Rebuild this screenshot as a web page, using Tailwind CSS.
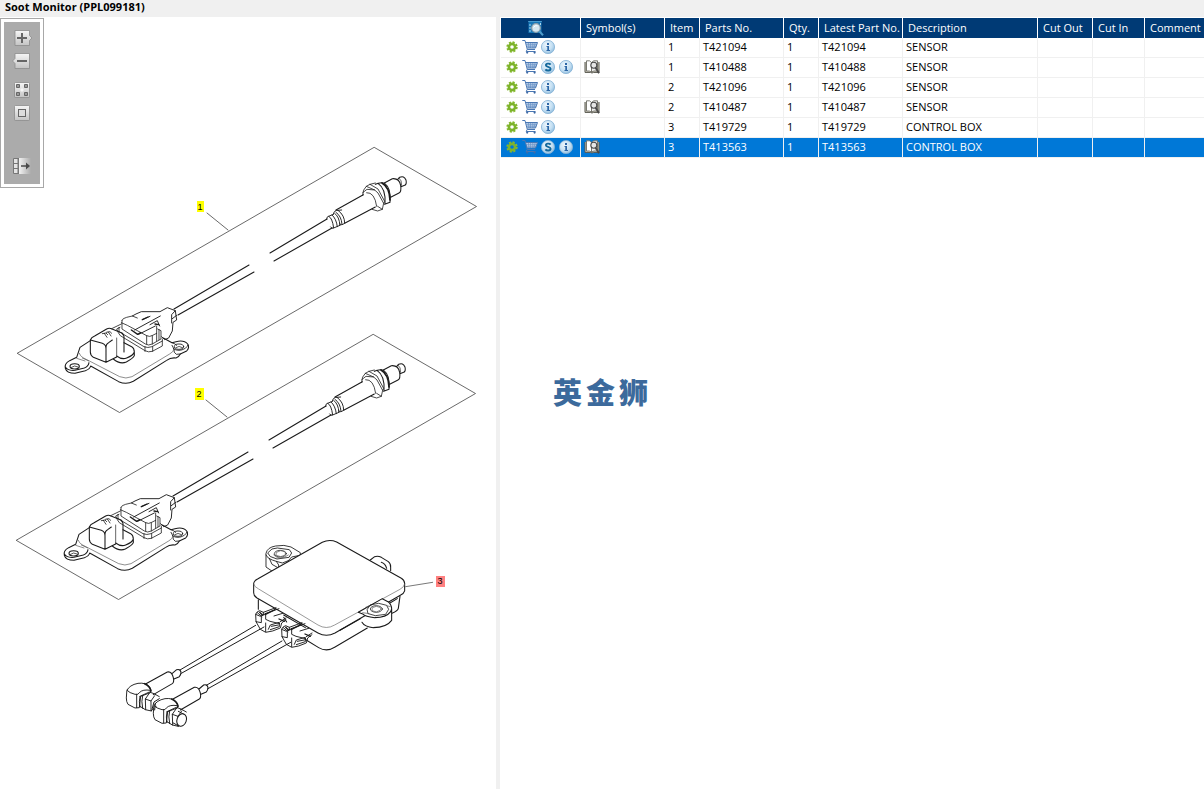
<!DOCTYPE html>
<html lang="en">
<head>
    <meta charset="UTF-8">
    <meta name="viewport" content="width=device-width, initial-scale=1.0">
    <title>Soot Monitor (PPL099181)</title>
    <script src="https://cdn.jsdelivr.net/npm/@tailwindcss/browser@4"></script>
</head>
<body class="bg-white text-black text-[11px] leading-4 font-['Open_Sans','Noto_Sans',sans-serif] min-h-screen flex flex-col">

    <!-- Shared icons -->
    <svg class="absolute size-0" aria-hidden="true">
        <defs>
            <linearGradient id="btn" x1="0" y1="0" x2="0" y2="1">
                <stop offset="0" stop-color="#f6f6f6"/><stop offset="1" stop-color="#c4c4c4"/>
            </linearGradient>
            <linearGradient id="fade" x1="0" y1="0" x2="1" y2="0">
                <stop offset="0" stop-color="#f2f2f2"/><stop offset="1" stop-color="#ababab"/>
            </linearGradient>
            <radialGradient id="ball" cx=".4" cy=".35" r=".7">
                <stop offset="0" stop-color="#eef7fd"/><stop offset=".6" stop-color="#c5e0f3"/><stop offset="1" stop-color="#8dbadc"/>
            </radialGradient>
        </defs>
        <symbol id="gear" viewBox="0 0 16 16">
            <circle cx="8" cy="8" r="4.7" fill="none" stroke="#86b92e" stroke-width="2" stroke-dasharray="2.1 1.59"/>
            <circle cx="8" cy="8" r="3.1" fill="none" stroke="#7db32b" stroke-width="2.6"/>
        </symbol>
        <symbol id="cart" viewBox="0 0 16 16">
            <path d="M3.5 3.5H15.5L13.5 9H5.5Z" fill="#c3d6ec"/>
            <path d="M4.3 5.3H14.8M4.8 7.2H14.2M6.3 3.5L7 9M8.6 3.5V9M10.8 3.5V9M13.2 3.5L12 9" fill="none" stroke="#6c94c6" stroke-width=".8"/>
            <path d="M.3 1.5H3L5.3 10.5H13M3.8 3.5H15.5L13.5 9H5.2" fill="none" stroke="#4b78b3" stroke-width="1"/>
            <path d="M5.2 10.500L4.200 12.500H13.500" fill="none" stroke="#4b78b3" stroke-width="1"/>
            <circle cx="5.2" cy="13.6" r="1.1" fill="#3f6ba6"/><circle cx="12.6" cy="13.6" r="1.1" fill="#3f6ba6"/>
        </symbol>
        <symbol id="info" viewBox="0 0 16 16">
            <circle cx="8" cy="8" r="6.6" fill="url(#ball)" stroke="#85b2d6" stroke-width=".8"/>
            <rect x="7" y="4" width="2" height="2" fill="#2c66a6"/>
            <path d="M6.5 7H9V11H10V12H6.5V11H7.3V8H6.5Z" fill="#2c66a6"/>
        </symbol>
        <symbol id="super" viewBox="0 0 16 16">
            <circle cx="8" cy="8" r="6.6" fill="url(#ball)" stroke="#85b2d6" stroke-width=".8"/>
            <path d="M10.6 5.6C9.6 4.2 5.9 4.2 5.9 6.2C5.9 8.3 10.6 7.5 10.6 9.8C10.6 12 6.5 12 5.4 10.4" fill="none" stroke="#15699c" stroke-width="1.9"/>
        </symbol>
        <symbol id="book" viewBox="0 0 16 16">
            <path d="M1 3V13.4H6.5L8 14L9.5 13.4H15V3" fill="#d6d2c4" stroke="#55554d"/>
            <path d="M2.5 1.8Q6 1 7.5 3.5V13Q5.5 11.5 2.5 12Z" fill="#fff" stroke="#6d6d64" stroke-width=".9"/>
            <path d="M13.5 1.8Q9 1 7.5 3.5V13Q9.5 11.5 13.5 12Z" fill="#eee" stroke="#6d6d64" stroke-width=".9"/>
            <circle cx="9.8" cy="6.2" r="3" fill="#e6e6e6" stroke="#494949" stroke-width="1.1"/>
            <path d="M11.6 8.8L15 14.2" stroke="#494949" stroke-width="1.9"/>
        </symbol>
        <symbol id="lookup" viewBox="0 0 16 16">
            <path d="M.5 1H13.500V13H.5Z" fill="#1677b8"/>
            <path d="M.5 1.500H13.500" stroke="#78c0e8" stroke-dasharray="1 1"/>
            <path d="M2 4V13M12.500 3V6" stroke="#a5d4ee" stroke-dasharray="2 1"/>
            <circle cx="8" cy="8" r="4.3" fill="#d3e6f0" stroke="#8b9da9" stroke-width="1.2"/>
            <path d="M5.5 7.5Q7 5 9.5 5.8" stroke="#fff" fill="none"/>
            <path d="M11.3 11.3L15 15.3" stroke="#4d9ccb" stroke-width="2"/>
        </symbol>
    </svg>

    <header class="bg-[#f0f0f0] h-[17px] px-[5px]">
        <h1 class="font-bold leading-[14px]">Soot Monitor (PPL099181)</h1>
    </header>

    <main class="flex flex-1">
        <!-- Drawing -->
        <section class="relative w-[500px] shrink-0 border-r-4 border-[#f0f0f0]">
            <svg class="block w-full" viewBox="0 17 496 772" fill="none" stroke="#1a1a1a" stroke-linejoin="round" stroke-linecap="round">
                <g id="probe">
                    <path d="M374.500 147.500L476.500 206.500L119.500 412.500L17.500 353.500Z" stroke="#444" stroke-width=".8"/>
                    <path d="M207 213L228 230" stroke="#444" stroke-width=".8"/>
                    <path d="M174 309L249 265M178 315L254 272M270 253L327 219M274 261L332 228" stroke-width="1.1"/>
                    <!-- probe tip -->
                    <g transform="translate(250 160) scale(.3333)" stroke-width="3.2">
                        <path d="M230 178Q229 170 236 169Q247 174 251 204Q245 207 242 201M236 169L250 163M251 204L270 196M246 165Q259 176 262 200M254 160Q268 170 270 196M250 163Q252 150 264 151Q284 166 284 190Q276 198 268 192M264 151L275 150M258 157Q274 168 276 192" stroke-width="2.8"/>
                        <path d="M258 150L340 104M284 190L376 141"/>
                        <path d="M338 106Q338 88 349 79L360 73L376 69M338 98L351 88L374 90L384 99L401 130L397 148L383 153L366 148M349 79L374 90M350 98Q374 96 380 139M383 139L397 148M360 73L384 87L404 124L401 130" stroke-width="2.4"/>
                        <path d="M376 73Q392 65 404 70Q424 84 420 127L404 133M384 70Q408 86 405 130"/>
                        <path d="M396 69Q419 82 420 120" stroke-width="5"/>
                        <path d="M403 69L427 56Q448 54 452 76Q455 95 447 99L422 112M443 58L449 52Q462 46 468 60Q471 73 464 76L453 80"/>
                        <path d="M447 54Q456 60 455 76" stroke-width="2"/>
                    </g>
                    <!-- sensor module -->
                    <g transform="translate(50 290) scale(.3333)" stroke-width="3.2">
                        <path d="M90 172L80 202L59 212Q42 222 46 235Q50 250 75 250L106 242Q120 237 122 228L206 275Q229 285 250 274L350 211Q362 202 378 204Q386 202 391 192L410 183Q420 172 413 162Q402 149 378 155L366 158L340 144M90 172L121 152M46 230Q51 243 75 241L103 234Q115 230 117 218"/>
                        <ellipse cx="74" cy="229" rx="14" ry="8"/>
                        <path d="M64 232Q73 224 85 231M377 173Q387 165 398 173" stroke-width="2.2"/>
                        <path d="M366 158Q378 162 380 166M370 176Q386 187 406 175Q413 169 414 165M366 166L372 177Q370 188 379 193L391 192" stroke-width="2.6"/>
                        <ellipse cx="387" cy="170" rx="14" ry="8" stroke-width="2.6"/>
                        <path d="M88 190Q90 198 99 203L209 260Q228 268 246 260L359 192Q370 186 372 178M97 204L116 213M80 205L105 213" stroke="#555" stroke-width="2"/>
                        <path d="M121 150Q124 142 134 138L170 117Q178 113 186 117L216 129Q223 135 222 146V186M121 150L157 160Q168 164 168 176V217L130 202Q121 196 121 186ZM168 176Q167 162 176 158L187 150M168 217L200 201"/>
                        <path d="M200 144V199" stroke-width="2"/>
                        <path d="M157 131L168 129L173 134M163 130L171 142M169 127L180 125L185 130M175 126L183 138" stroke-width="2.4"/>
                        <path d="M222 158L245 170Q253 175 253 186V197Q250 205 229 216Q210 224 190 207M253 186Q250 196 230 204Q216 210 200 198"/>
                        <path d="M216 91Q217 85 230 82L247 78L262 84M216 91V117L286 162Q295 168 307 162L333 147V122L323 117M214 98L232 106L290 137Q299 142 308 136L320 130M290 137V162M307 137V162M320 108V153M327 119V149M210 112L200 117Q205 130 211 137L285 182Q295 188 307 184L337 168V147M207 112V125L282 170Q293 175 306 170L337 153M285 170V184M308 170V184M185 116L214 102" stroke-width="2.4"/>
                        <path d="M247 78L258 72L274 65L330 65L352 53L376 62L380 90L369 97L367 123L356 144L344 149L335 140M376 62L365 74V99M380 76L367 86M254 120L331 78M266 133L316 108M277 89L300 79M300 104L322 92L329 108" stroke-width="2.8"/>
                        <path d="M244 120L263 133L272 128M277 89L294 81M315 102L326 104" stroke-width="4"/>
                    </g>
                </g>
                <use href="#probe" transform="translate(-1 187)"/>

                <!-- control box -->
                <g transform="translate(240 530) scale(.3333)" stroke-width="3.2">
                    <path d="M97 124L78 111V70Q82 52 107 48Q133 43 153 51L181 68V76M78 75Q82 87 109 94L127 99L145 92L155 81L180 76M88 85L96 103L119 116M109 94L116 105V114M145 92L143 101M84 68L96 57L112 54L148 59L155 69L147 82L111 87L92 80Z" stroke-width="2.6"/>
                    <ellipse cx="121" cy="71" rx="18" ry="10" stroke-width="2.2"/>
                    <path d="M110 67L122 62L136 66V75L122 80L109 76ZM101 75Q119 94 145 75" stroke="#555" stroke-width="2"/>
                    <path d="M391 90L404 80Q414 77 424 82L445 95Q453 101 452 112V122M424 97Q436 101 440 115"/>
                    <path d="M41 160Q43 151 54 146L247 37Q268 27 290 36L484 145Q493 150 494 160V183Q492 191 481 196L285 309Q259 323 234 309L51 204Q41 197 41 188Z" fill="#fff"/>
                    <path d="M41 162Q43 171 56 177L234 285Q259 300 284 285L480 178Q492 172 494 162" stroke="#666" stroke-width="2"/>
                    <path d="M55 209V238M131 262L140 276M195 328L236 353Q260 367 284 352L382 294M480 199L475 235Q473 243 456 250M196 293L131 255M445 222L472 206"/>
                    <path d="M355 247L370 253Q375 259 404 263Q439 263 452 245L455 237Q455 224 444 215L427 206L355 247M366 277Q374 291 400 293Q440 292 455 271V237M362 266L300 301" fill="#fff"/>
                    <path d="M382 238L390 225L416 220L440 226L446 238L437 253L406 257L385 251Z" stroke-width="2.4"/>
                    <ellipse cx="409" cy="237" rx="18" ry="10" stroke-width="2.2"/>
                    <path d="M398 233L409 229L422 233V240L409 246L397 242ZM368 248L387 251M440 227L451 230M390 226L377 232" stroke="#555" stroke-width="2"/>
                    <path d="M497 170L578 157" stroke="#555" stroke-width="2.4"/>
                    <g id="plug">
                        <path d="M48 275L47 253Q50 244 59 242L70 247L108 233M47 253L61 259L78 250L117 236M64 260V278L48 275L61 298L77 307L98 303L121 294L125 279L138 269M77 250V268L90 274L119 281M70 247V255M85 298L91 285L118 277V290L91 299M102 258L128 250M121 275L138 264M52 248L66 260M77 279V305M94 289L115 285" stroke-width="2.8"/>
                        <path d="M59 247L68 256M75 254L105 239M117 267L133 274" stroke-width="4"/>
                    </g>
                    <use href="#plug" transform="translate(78 45)"/>
                </g>

                <!-- elbow leads -->
                <g transform="translate(110 620) scale(.3333)" stroke-width="3.2">
                    <path d="M210 150L437 16M214 160L462 21M289 196L516 63M294 206L542 67" stroke-width="3"/>
                    <g id="elbow">
                        <path d="M108 191L172 156Q185 153 190 173Q193 187 187 191L130 224M186 161L200 149Q210 146 213 156Q213 165 208 170L192 177"/>
                        <path d="M51 211Q58 195 84 190Q108 187 119 201Q125 210 121 218L92 229L88 263L75 264L54 253Q49 246 49 235ZM51 211Q58 219 75 223Q86 225 88 218Q98 207 121 211M80 223V263" fill="#fff" stroke-width="2.8"/>
                        <path d="M104 191Q120 198 123 213" stroke-width="5"/>
                        <path d="M90 229L118 216L132 221L148 230M88 258L106 269L124 273M90 229Q86 245 90 261M98 226Q93 244 98 265M119 218L106 237L107 269M106 237L123 243L134 227M123 243V273L139 259" stroke-width="2.8"/>
                    </g>
                    <use href="#elbow" transform="translate(81 46)"/>
                    <ellipse cx="215" cy="300" rx="14" ry="19" transform="rotate(20 215 300)" fill="#fff"/>
                    <path d="M204 317L190 309M220 282L205 274M126 268L132 246L148 236M134 270L136 250" stroke-width="3"/>
                </g>

                <g stroke="none" font-family="Liberation Sans, sans-serif" font-size="9" text-anchor="middle" fill="#000">
                    <rect x="197" y="201" width="7" height="11" fill="#ff0"/>
                    <text x="200" y="210">1</text>
                    <rect x="195" y="388" width="9" height="12" fill="#ff0"/>
                    <text x="199" y="397">2</text>
                    <rect x="436" y="576" width="9" height="11" fill="#ff8080"/>
                    <text x="440" y="584">3</text>
                </g>
            </svg>

            <!-- Zoom toolbar floats over the drawing -->
            <div class="absolute left-0 top-px border border-[#a8a8a8] bg-white p-[3px]">
                <div class="bg-[#ababab] w-9 h-[162px] pt-2 flex flex-col items-center">
                    <button class="w-5 h-4" aria-label="Zoom in">
                        <svg viewBox="0 0 20 16" class="w-5 h-4">
                            <path d="M3 .5H17.5V5.5L20 8L17.5 10.5V15.5H3Z" fill="url(#btn)" stroke="#8c8c8c" stroke-width=".8"/>
                            <path d="M5 8H15M10 3V13" stroke="#666" stroke-width="2"/>
                        </svg>
                    </button>
                    <button class="w-5 h-4 mt-[7px]" aria-label="Zoom out">
                        <svg viewBox="0 0 20 16" class="w-5 h-4">
                            <path d="M17.5 .5H3V5.5L.5 8L3 10.5V15.5H17.5Z" fill="url(#btn)" stroke="#8c8c8c" stroke-width=".8"/>
                            <path d="M5 8H15" stroke="#666" stroke-width="2"/>
                        </svg>
                    </button>
                    <button class="w-4 h-4 mt-[13px]" aria-label="Fit to window">
                        <svg viewBox="0 0 16 16" class="size-4">
                            <rect x=".5" y=".5" width="15" height="15" rx="1" fill="url(#btn)" stroke="#8c8c8c" stroke-width=".8"/>
                            <path d="M2.5 2.5h3v3h-3zM10.5 2.5h3v3h-3zM2.5 10.5h3v3h-3zM10.5 10.5h3v3h-3z" fill="#999" stroke="#666"/>
                            <path d="M6.5 8h3M8 6.5v3" stroke="#f6f6f6" stroke-width="2"/>
                        </svg>
                    </button>
                    <button class="w-4 h-4 mt-[7px]" aria-label="Actual size">
                        <svg viewBox="0 0 16 16" class="size-4">
                            <rect x=".5" y=".5" width="15" height="15" rx="1" fill="url(#btn)" stroke="#8c8c8c" stroke-width=".8"/>
                            <rect x="4.5" y="4.5" width="7" height="7" stroke="#666" fill="#ddd"/>
                        </svg>
                    </button>
                    <button class="w-[18px] h-4 mt-[37px]" aria-label="Hide drawing">
                        <svg viewBox="0 0 18 16" class="w-[18px] h-4">
                            <path d="M.5 .5H5V15.5H.5Z" fill="#e4e4e4" stroke="#777"/>
                            <path d="M.5 5.5H5M.5 10.5H5" stroke="#777"/>
                            <rect x="6" y="0" width="12" height="16" fill="url(#fade)"/>
                            <path d="M5.5 0V16" stroke="#777"/>
                            <path d="M8 8H14" stroke="#4a4a4a" stroke-width="1.5"/>
                            <path d="M13 4.5L17 8L13 11.5Z" fill="#4a4a4a"/>
                        </svg>
                    </button>
                </div>
            </div>
        </section>

        <!-- Parts list -->
        <section class="flex-1 min-w-0 pt-px pl-px overflow-hidden">
            <table class="w-full table-fixed border-separate border-spacing-0 whitespace-nowrap text-left [&_th]:h-5 [&_th]:p-0 [&_th]:pl-[5px] [&_th]:font-normal [&_th]:border-r [&_th]:border-white [&_td]:h-5 [&_td]:p-0 [&_td]:pl-[3px] [&_td]:pb-0.5 [&_td]:border-r [&_td]:border-b [&_td]:border-[#f0f0f0] [&_th:last-child]:border-r-0 [&_td:last-child]:border-r-0 [&_svg]:size-4 [&_svg]:block">
                <colgroup>
                    <col class="w-20"><col class="w-[84px]"><col class="w-[35px]"><col class="w-[84px]"><col class="w-[35px]"><col class="w-[84px]"><col class="w-[135px]"><col class="w-[55px]"><col class="w-[52px]"><col>
                </colgroup>
                <thead class="bg-[#003a75] text-white">
                    <tr>
                        <th><button class="block ml-[22px]" aria-label="Look up"><svg><use href="#lookup"/></svg></button></th>
                        <th>Symbol(s)</th>
                        <th>Item</th>
                        <th>Parts No.</th>
                        <th>Qty.</th>
                        <th>Latest Part No.</th>
                        <th>Description</th>
                        <th>Cut Out</th>
                        <th>Cut In</th>
                        <th>Comment</th>
                    </tr>
                </thead>
                <tbody>
                    <tr>
                        <td><div class="flex gap-0.5"><button aria-label="Options"><svg><use href="#gear"/></svg></button><button aria-label="Add to cart"><svg><use href="#cart"/></svg></button><button aria-label="Information"><svg><use href="#info"/></svg></button></div></td>
                        <td></td>
                        <td>1</td><td>T421094</td><td>1</td><td>T421094</td><td>SENSOR</td><td></td><td></td><td></td>
                    </tr>
                    <tr>
                        <td><div class="flex gap-0.5"><button aria-label="Options"><svg><use href="#gear"/></svg></button><button aria-label="Add to cart"><svg><use href="#cart"/></svg></button><button aria-label="Supersession"><svg><use href="#super"/></svg></button><button aria-label="Information"><svg><use href="#info"/></svg></button></div></td>
                        <td><svg><use href="#book"/></svg></td>
                        <td>1</td><td>T410488</td><td>1</td><td>T410488</td><td>SENSOR</td><td></td><td></td><td></td>
                    </tr>
                    <tr>
                        <td><div class="flex gap-0.5"><button aria-label="Options"><svg><use href="#gear"/></svg></button><button aria-label="Add to cart"><svg><use href="#cart"/></svg></button><button aria-label="Information"><svg><use href="#info"/></svg></button></div></td>
                        <td></td>
                        <td>2</td><td>T421096</td><td>1</td><td>T421096</td><td>SENSOR</td><td></td><td></td><td></td>
                    </tr>
                    <tr>
                        <td><div class="flex gap-0.5"><button aria-label="Options"><svg><use href="#gear"/></svg></button><button aria-label="Add to cart"><svg><use href="#cart"/></svg></button><button aria-label="Information"><svg><use href="#info"/></svg></button></div></td>
                        <td><svg><use href="#book"/></svg></td>
                        <td>2</td><td>T410487</td><td>1</td><td>T410487</td><td>SENSOR</td><td></td><td></td><td></td>
                    </tr>
                    <tr>
                        <td><div class="flex gap-0.5"><button aria-label="Options"><svg><use href="#gear"/></svg></button><button aria-label="Add to cart"><svg><use href="#cart"/></svg></button><button aria-label="Information"><svg><use href="#info"/></svg></button></div></td>
                        <td></td>
                        <td>3</td><td>T419729</td><td>1</td><td>T419729</td><td>CONTROL BOX</td><td></td><td></td><td></td>
                    </tr>
                    <tr class="bg-[#0078d7] text-white">
                        <td><div class="flex gap-0.5"><button aria-label="Options"><svg><use href="#gear"/></svg></button><button aria-label="Add to cart"><svg><use href="#cart"/></svg></button><button aria-label="Supersession"><svg><use href="#super"/></svg></button><button aria-label="Information"><svg><use href="#info"/></svg></button></div></td>
                        <td><svg><use href="#book"/></svg></td>
                        <td>3</td><td>T413563</td><td>1</td><td>T413563</td><td>CONTROL BOX</td><td></td><td></td><td></td>
                    </tr>
                </tbody>
            </table>

            <div class="mt-[217px] pl-[52px] flex gap-1 text-[29px] leading-8 font-black text-[#3c6a9c] font-['Noto_Sans_CJK_SC',sans-serif]" lang="zh">
                <span>英</span><span>金</span><span>狮</span>
            </div>
        </section>
    </main>

</body>
</html>
